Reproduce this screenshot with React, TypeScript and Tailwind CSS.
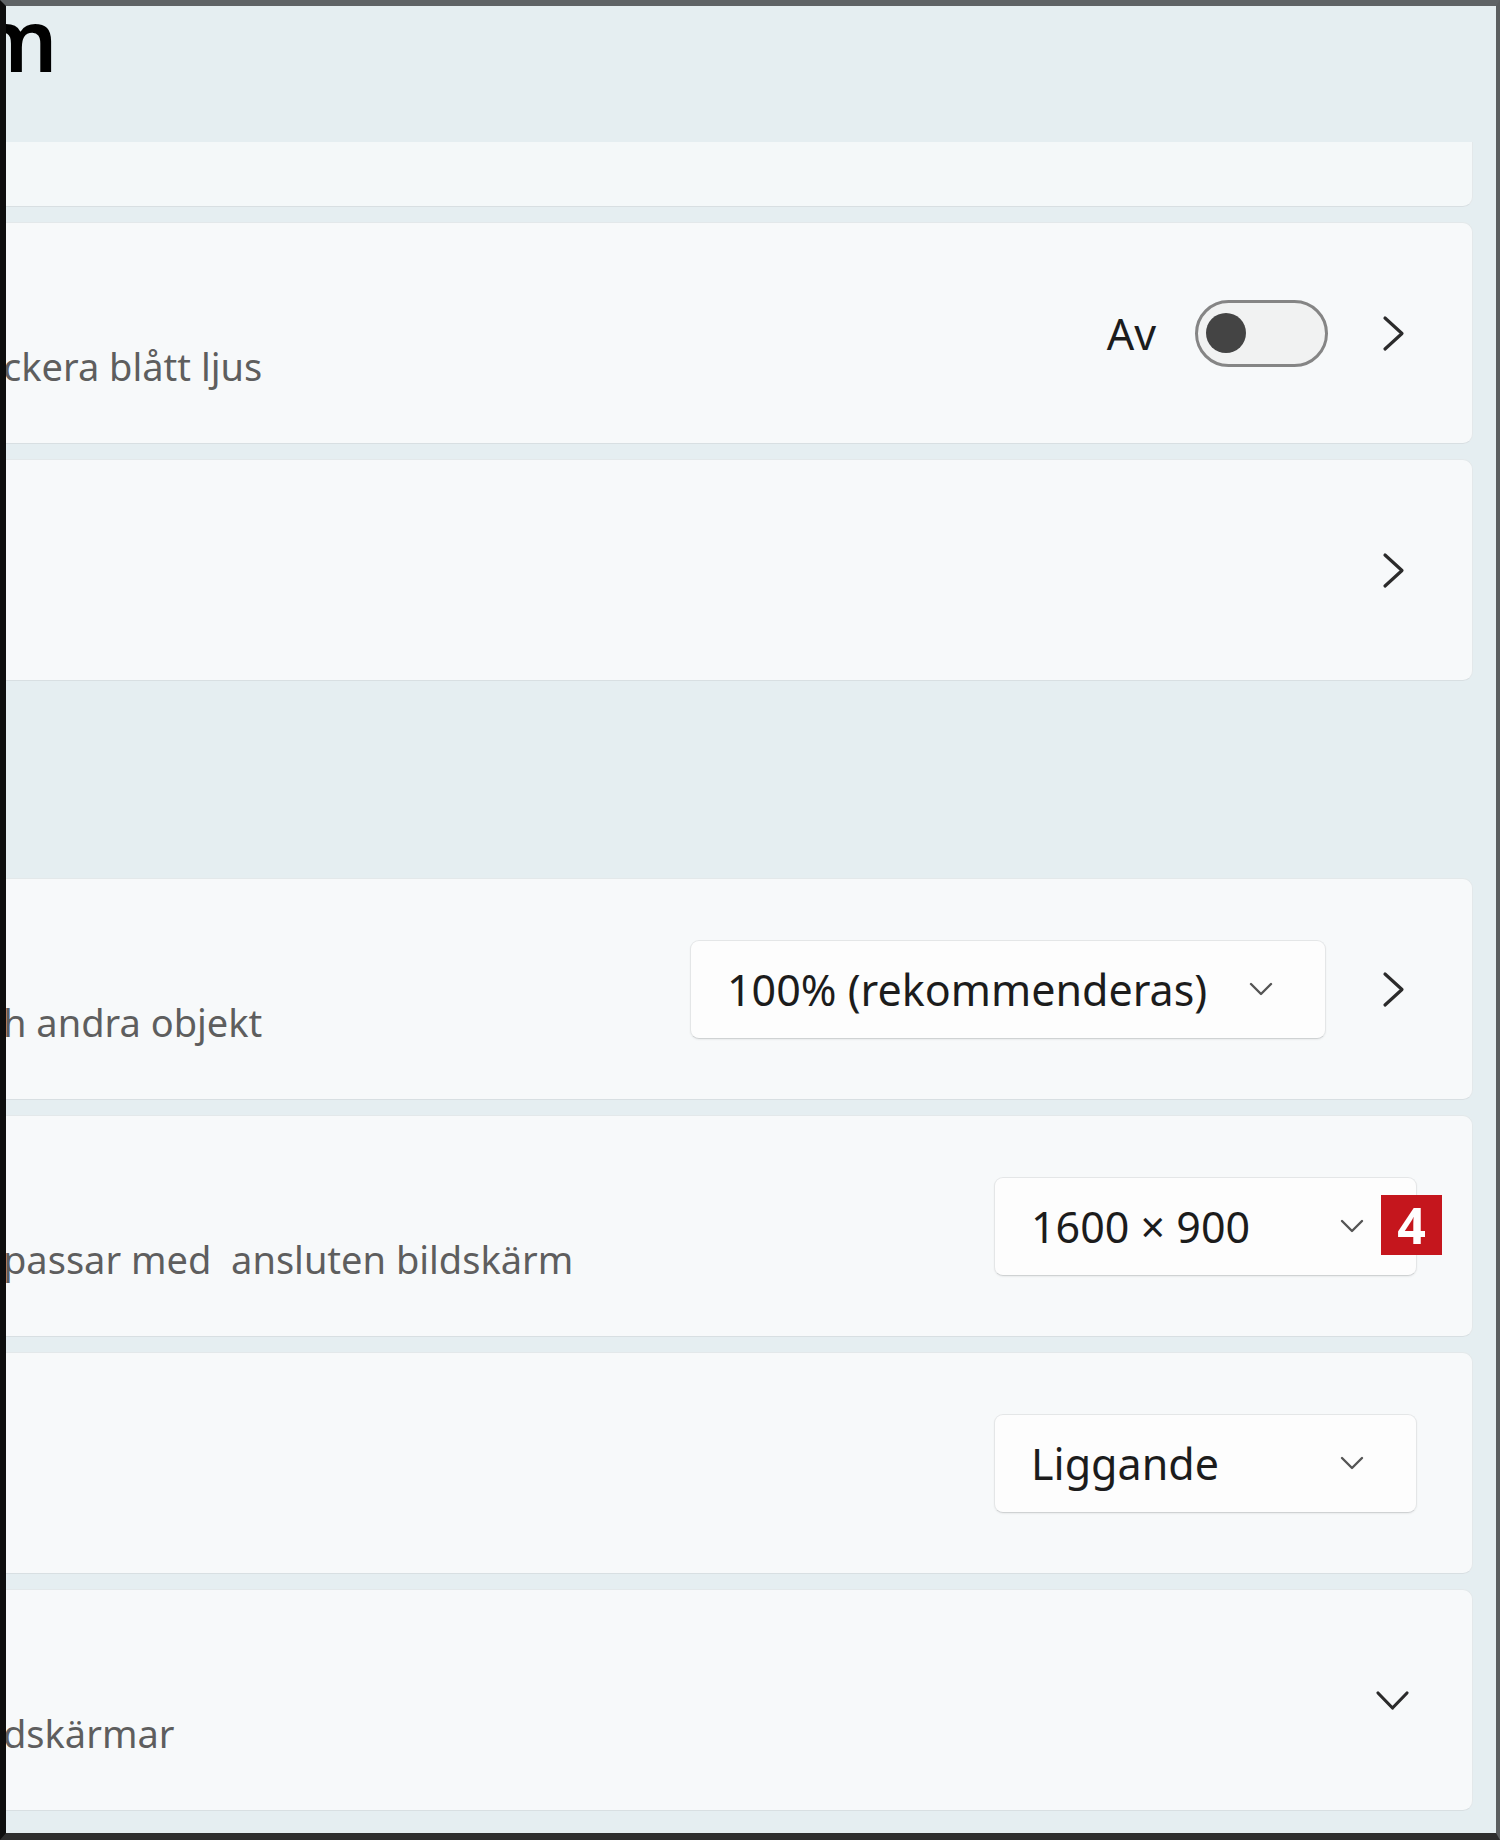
import type { ReactNode } from "react";

function ChevronRight() {
  return (
    <svg width="23" height="37" viewBox="0 0 23 37" fill="none" stroke="#2b2b2b" strokeWidth="3.2" strokeLinecap="round" strokeLinejoin="round">
      <polyline points="3,3 20,18.5 3,34" />
    </svg>
  );
}

function ChevronDown({ big }: { big?: boolean }) {
  if (big) {
    return (
      <svg width="35" height="21" viewBox="0 0 35 21" fill="none" stroke="#2b2b2b" strokeWidth="3.2" strokeLinecap="round" strokeLinejoin="round">
        <polyline points="3,3 17.5,18 32,3" />
      </svg>
    );
  }
  return (
    <svg width="24" height="14" viewBox="0 0 24 14" fill="none" stroke="#555" strokeWidth="2.4" strokeLinecap="round" strokeLinejoin="round">
      <polyline points="2,2 12,12 22,2" />
    </svg>
  );
}

function Toggle() {
  return (
    <div className="flex h-[67px] w-[133px] items-center rounded-full border-[3px] border-[#858585] bg-[#f1f2f2] pl-[8px]">
      <div className="h-[40px] w-[40px] rounded-full bg-[#444]" />
    </div>
  );
}

function Dropdown({ value, width, badge }: { value: string; width: string; badge?: boolean }) {
  return (
    <div
      className={`relative flex h-[99px] items-center justify-between rounded-[9px] border border-[#e4e6e7] border-b-[#cfd2d3] bg-[#fdfdfd] pl-[36px] pr-[52px] shadow-[0_1px_2px_rgba(0,0,0,0.06)] ${width}`}
    >
      <span className="text-[43px] leading-none text-[#1c1c1c]">{value}</span>
      <ChevronDown />
      {badge && (
        <div className="absolute left-[386px] top-[17px] flex h-[60px] w-[61px] items-center justify-center bg-[#c5161d] text-[50px] font-bold leading-none text-white">
          4
        </div>
      )}
    </div>
  );
}

function Card({ desc, right, pr }: { desc?: string; right: ReactNode; pr: string }) {
  return (
    <div className="flex h-[222px] items-stretch justify-between rounded-[10px] border border-[#e3e8ea] border-b-[#d8dfe2] bg-[#f7f9fa]">
      <div className="pl-[26px] pt-[124px]">
        {desc && <p className="whitespace-pre text-[38px] leading-none text-[#5e5e5e]">{desc}</p>}
      </div>
      <div className={`flex items-center ${pr}`}>{right}</div>
    </div>
  );
}

export default function App() {
  return (
    <div
      className="h-[1840px] w-[1500px] overflow-hidden border-b-[7px] border-l-[6px] border-r-[4px] border-t-[6px] border-b-[#2e2e2e] border-l-[#0e0e0e] border-r-[#5b5e60] border-t-[#5f6366] bg-[#e5eef1]"
      style={{ fontFamily: "'Noto Sans', 'Open Sans', sans-serif" }}
    >
      <div className="h-[136px] overflow-hidden">
        <h1 className="ml-[-31px] mt-[-10px] text-[86px] font-semibold leading-none text-black">m</h1>
      </div>

      <div className="ml-[-30px] mr-[23px] flex flex-col">
        <div className="h-[65px] rounded-b-[10px] border border-t-0 border-[#e3e8ea] border-b-[#d8dfe2] bg-[#f4f8f9]" />

        <div className="mt-[15px] flex flex-col gap-[15px]">
          <Card
            desc="ckera blått ljus"
            pr="pr-[67px]"
            right={
              <>
                <span className="mr-[39px] text-[43px] leading-none text-[#1c1c1c]">Av</span>
                <Toggle />
                <div className="ml-[54px]">
                  <ChevronRight />
                </div>
              </>
            }
          />
          <Card pr="pr-[67px]" right={<ChevronRight />} />
        </div>

        <div className="mt-[197px] flex flex-col gap-[15px]">
          <Card
            desc="h andra objekt"
            pr="pr-[67px]"
            right={
              <>
                <Dropdown value="100% (rekommenderas)" width="w-[636px]" />
                <div className="ml-[56px]">
                  <ChevronRight />
                </div>
              </>
            }
          />
          <Card
            desc="passar med  ansluten bildskärm"
            pr="pr-[55px]"
            right={<Dropdown value="1600 × 900" width="w-[423px]" badge />}
          />
          <Card pr="pr-[55px]" right={<Dropdown value="Liggande" width="w-[423px]" />} />
          <Card desc="dskärmar" pr="pr-[62px]" right={<ChevronDown big />} />
        </div>
      </div>
    </div>
  );
}
